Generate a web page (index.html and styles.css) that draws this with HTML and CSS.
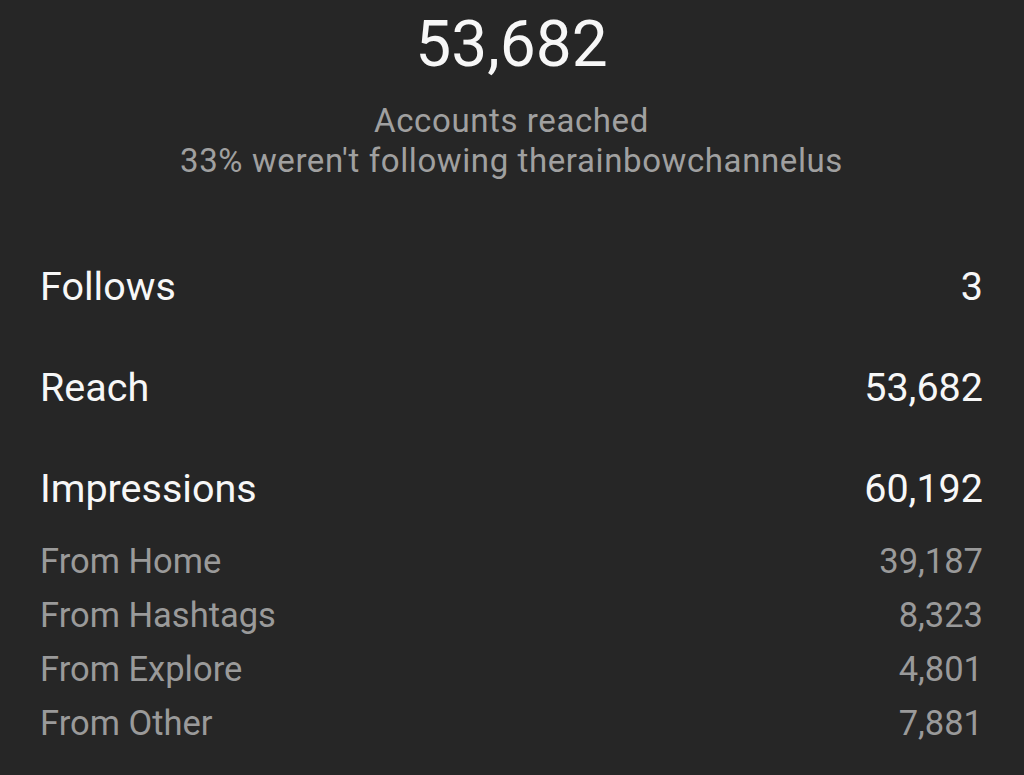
FILE: index.html
```html
<!DOCTYPE html>
<html lang="en">
<head>
<meta charset="utf-8">
<title>Insights</title>
<link rel="stylesheet" href="styles.css">
</head>
<body>
<main class="page">
  <header class="summary">
    <div class="summary-value">53,682</div>
    <p class="summary-caption">Accounts reached<br>33% weren't following therainbowchannelus</p>
  </header>
  <section class="metrics">
    <div class="metric"><span>Follows</span><span>3</span></div>
    <div class="metric"><span>Reach</span><span>53,682</span></div>
    <div class="metric"><span>Impressions</span><span>60,192</span></div>
  </section>
  <section class="sources">
    <div class="source"><span>From Home</span><span>39,187</span></div>
    <div class="source"><span>From Hashtags</span><span>8,323</span></div>
    <div class="source"><span>From Explore</span><span>4,801</span></div>
    <div class="source"><span>From Other</span><span>7,881</span></div>
  </section>
</main>
</body>
</html>
```
FILE: styles.css
```css
html, body {
  margin: 0;
  padding: 0;
  background: #262626;
}
body {
  font-family: Roboto, "Liberation Sans", sans-serif;
  color: #f5f5f5;
}
.page {
  width: 1024px;
  height: 775px;
  overflow: hidden;
  box-sizing: border-box;
  padding: 9px 41px 0 40px;
}
.summary {
  display: flex;
  flex-direction: column;
  align-items: center;
  text-align: center;
}
.summary-value {
  font-size: 64px;
  line-height: 72px;
  color: #f7f7f7;
}
.summary-caption {
  margin: 20px 0 0 0;
  font-size: 33px;
  letter-spacing: 0.6px;
  line-height: 40px;
  color: #a0a0a0;
}
.metrics {
  display: flex;
  flex-direction: column;
  gap: 53px;
  margin-top: 82px;
}
.metric {
  display: flex;
  justify-content: space-between;
  font-size: 39.5px;
  line-height: 48px;
  color: #f7f7f7;
}
.sources {
  display: flex;
  flex-direction: column;
  margin-top: 21px;
}
.source {
  display: flex;
  justify-content: space-between;
  font-size: 34.5px;
  line-height: 54px;
  color: #9a9a9a;
}
```
